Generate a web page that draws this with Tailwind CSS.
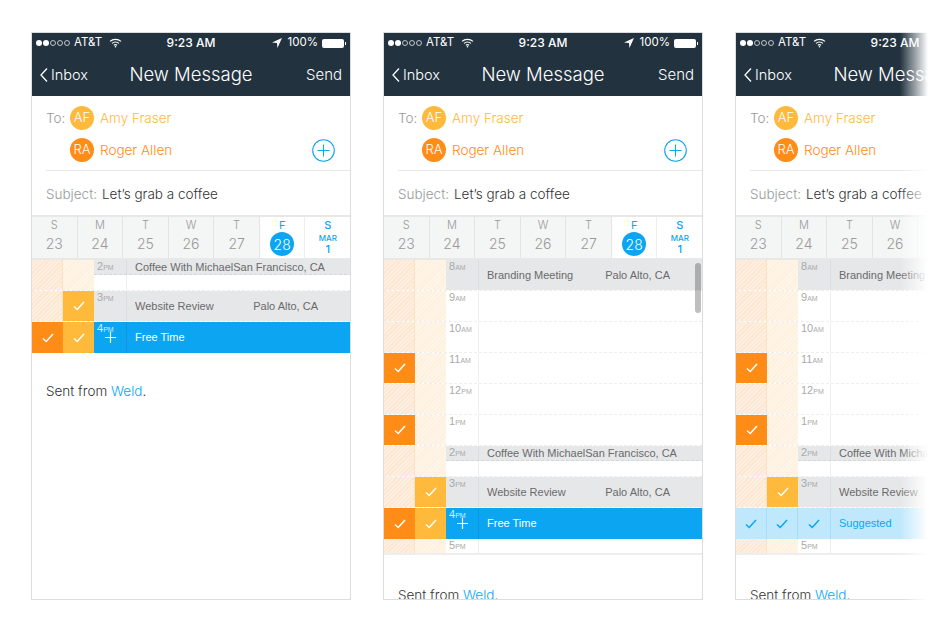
<!DOCTYPE html>
<html lang="en">
<head>
    <meta charset="UTF-8">
    <meta name="viewport" content="width=device-width, initial-scale=1.0">
    <title>Weld - New Message</title>
    <script src="https://cdn.jsdelivr.net/npm/@tailwindcss/browser@4"></script>
</head>
<body class="bg-white">
    <div class="relative w-[940px] h-[632px] overflow-hidden font-['Inter','Liberation_Sans',sans-serif] font-light">
        <div id="phones" class="flex gap-[32px] pl-[31px] pt-[32px]"></div>
        <!-- fade on the third phone -->
        <div class="absolute top-0 right-0 w-[40px] h-full bg-gradient-to-r from-white/0 to-white to-70%"></div>
    </div>

    <script>
        const check = (color = 'white') => `<svg width="12" height="10" viewBox="0 0 12 10" fill="none" stroke="${color}" stroke-width="1.5"><path d="M1 5.5 L4.2 8.5 L11 1"/></svg>`;
        const hatchOrange = '<div class="w-[31px] shrink-0 border-r border-[#fbe0c4] bg-[repeating-linear-gradient(135deg,#fde6cf_0,#fde6cf_1px,#feeee0_1px,#feeee0_3px)]"></div>';
        const hatchYellow = '<div class="w-[31px] shrink-0 bg-[repeating-linear-gradient(135deg,#fef0da_0,#fef0da_1px,#fef5e8_1px,#fef5e8_3px)]"></div>';
        const solidOrange = `<div class="w-[31px] shrink-0 bg-[#ff8c16] flex items-center justify-center">${check()}</div>`;
        const solidYellow = `<div class="w-[31px] shrink-0 bg-[#ffb93b] flex items-center justify-center">${check()}</div>`;
        const paleCheck = `<div class="w-[31px] shrink-0 border-r border-[#a9dcf6] flex items-center justify-center">${check('#0ba5f2')}</div>`;

        const time = (n, ap, color = 'text-[#aaa]') => `<span class="${color}">${n}<span class="text-[7px]">${ap}</span></span>`;
        const timeCell = (label, cls = 'border-[#eee]') => `<div class="w-[33px] shrink-0 border-r ${cls} pl-[3px] text-[11px] leading-[12px] font-['Liberation_Sans',sans-serif]">${label}</div>`;
        const event = (title, place) => `<div class="flex-1 flex items-center justify-between pl-[8px] pr-[32px] text-[11px] text-[#6a6a6a] whitespace-nowrap font-['Liberation_Sans',sans-serif]"><span>${title}</span><span>${place}</span></div>`;

        // one hour in the calendar, 31px tall
        const hour = (a, b, right, cls = 'border-b border-dashed border-[#eee]') => `<div class="flex h-[31px] shrink-0 ${cls}">${a}${b}<div class="flex-1 flex">${right}</div></div>`;
        const emptyHour = (a, b, n, ap) => hour(a, b, timeCell(time(n, ap)));
        const meeting = (a, b, n, ap, title, place) => hour(a, b, `<div class="flex-1 flex bg-[#e6e7e9]">${timeCell(time(n, ap), 'border-[#dcdde0]')}${event(title, place)}</div>`);
        const halfMeeting = (a, b, n, ap, title, place) => `<div class="flex h-[31px] shrink-0 border-b border-dashed border-[#eee]">${a}${b}<div class="flex-1 flex flex-col">
            <div class="h-[15px] flex bg-[#e6e7e9] border-b border-dashed border-[#d5d6d9]">${timeCell(time(n, ap), 'border-[#dcdde0]')}${event(title, place)}</div>
            <div class="flex-1 flex">${timeCell('')}</div></div></div>`;
        const freeTime = hour(solidOrange, solidYellow, `<div class="flex-1 flex bg-[#0ba5f2]">
            <div class="w-[33px] shrink-0 border-r border-[#0a97de] pl-[3px] relative text-[11px] leading-[12px] font-['Liberation_Sans',sans-serif]">${time('4', 'PM', 'text-[#d4effd]')}
                <svg class="absolute left-[10px] top-[9px]" width="13" height="13" viewBox="0 0 13 13" stroke="white" stroke-width="1.2"><path d="M6.5 1 V12 M1 6.5 H12"/></svg></div>
            <div class="flex-1 flex items-center pl-[8px] text-[11px] text-white font-['Liberation_Sans',sans-serif]">Free Time</div></div>`, '');
        const suggested = `<div class="flex h-[31px] shrink-0 bg-[#bfe8fc]">${paleCheck}${paleCheck}
            <div class="w-[33px] shrink-0 border-r border-[#a9dcf6] flex items-center justify-center">${check('#0ba5f2')}</div>
            <div class="flex-1 flex items-center pl-[8px] text-[11px] text-[#0ba5f2] font-['Liberation_Sans',sans-serif]">Suggested</div></div>`;
        const lastHalf = `<div class="flex h-[16px] shrink-0 mb-[2px] border-b-2 border-[#eee]">${hatchOrange}${hatchYellow}${timeCell(time('5', 'PM'))}</div>`;

        const day = (letter, num) => `<div class="flex-1 border-r border-[#e4e4e4] bg-[#f4f5f5] flex flex-col items-center text-[#999]">
            <span class="text-[11px] leading-[14px] mt-[1px]">${letter}</span><span class="text-[14px] leading-[20px] mt-[2px]">${num}</span></div>`;

        const header = `
            <div class="bg-[#22333f] h-[63px] text-white shrink-0">
                <div class="grid grid-cols-[1fr_auto_1fr] items-center h-[20px] px-[4px] text-[11.5px] font-normal">
                    <div class="flex items-center gap-[1.5px]">
                        <span class="w-[5.5px] h-[5.5px] rounded-full bg-white"></span><span class="w-[5.5px] h-[5.5px] rounded-full bg-white"></span>
                        <span class="w-[5.5px] h-[5.5px] rounded-full border border-white/70"></span><span class="w-[5.5px] h-[5.5px] rounded-full border border-white/70"></span><span class="w-[5.5px] h-[5.5px] rounded-full border border-white/70"></span>
                        <span class="ml-[3px]">AT&amp;T</span>
                        <svg class="ml-[5px]" width="13" height="10" viewBox="0 0 13 10" fill="none" stroke="white" stroke-width="1.2"><path d="M1 3.4 C4 0.6 9 0.6 12 3.4 M3 5.4 C5 3.6 8 3.6 10 5.4 M4.9 7.3 C5.8 6.5 7.2 6.5 8.1 7.3"/><circle cx="6.5" cy="8.8" r="0.8" fill="white" stroke="none"/></svg>
                    </div>
                    <div class="font-medium text-[12px]">9:23 AM</div>
                    <div class="flex items-center justify-end gap-[4px]">
                        <svg class="mr-[2px]" width="10" height="10" viewBox="0 0 10 10" fill="white"><path d="M10 0 L0 4.6 L5 5 L5.4 10 Z"/></svg>
                        <span>100%</span>
                        <span class="flex items-center gap-[1px]"><span class="w-[22px] h-[9px] bg-white rounded-[2px]"></span><span class="w-[1px] h-[3px] bg-white"></span></span>
                    </div>
                </div>
                <div class="grid grid-cols-[1fr_auto_1fr] items-center h-[43px] pt-[1px] px-[8px]">
                    <div class="flex items-center gap-[3px] text-[14.5px]">
                        <svg width="8" height="14" viewBox="0 0 8 14" fill="none" stroke="white" stroke-width="1.3"><path d="M7 0.5 L1 7 L7 13.5"/></svg>
                        <span>Inbox</span>
                    </div>
                    <div class="text-[18.5px]">New Message</div>
                    <div class="text-right text-[15px]">Send</div>
                </div>
            </div>
            <div class="h-[76px] pl-[14px] shrink-0">
                <div class="h-[75px] border-b border-[#e8e8e8] text-[13.5px] pt-[10px] pr-[15px]">
                    <div class="flex items-center h-[24px]">
                        <span class="w-[24px] text-[#999]">To:</span>
                        <span class="w-[24px] h-[24px] rounded-full bg-[#ffb93b] text-white text-[13px] flex items-center justify-center">AF</span>
                        <span class="ml-[6px] text-[#ffb93b]">Amy Fraser</span>
                    </div>
                    <div class="flex items-center h-[24px] mt-[8px] pl-[24px]">
                        <span class="w-[24px] h-[24px] rounded-full bg-[#ff8c16] text-white text-[13px] flex items-center justify-center">RA</span>
                        <span class="ml-[6px] text-[#ff8c16]">Roger Allen</span>
                        <svg class="ml-auto" width="23" height="23" viewBox="0 0 23 23" fill="none" stroke="#0ba5f2" stroke-width="1.1"><circle cx="11.5" cy="11.5" r="10.8"/><path d="M11.5 5.5 V17.5 M5.5 11.5 H17.5"/></svg>
                    </div>
                </div>
            </div>
            <div class="h-[43px] pl-[14px] pt-[1px] flex items-center text-[13.5px] shrink-0 whitespace-nowrap"><span class="text-[#999]">Subject:</span><span class="ml-[5px] text-[#333]">Let’s grab a coffee</span></div>
            <div class="flex h-[45px] border-y-2 border-[#e8e8e8] shrink-0">
                ${day('S', '23')}${day('M', '24')}${day('T', '25')}${day('W', '26')}${day('T', '27')}
                <div class="flex-1 border-r border-[#eee] flex flex-col items-center text-[#0ba5f2]">
                    <span class="text-[11px] leading-[14px] mt-[1px] font-normal">F</span>
                    <span class="w-[24px] h-[24px] rounded-full bg-[#0ba5f2] text-white text-[14px] flex items-center justify-center">28</span>
                </div>
                <div class="flex-1 flex flex-col items-center text-[#0ba5f2] font-medium">
                    <span class="text-[11px] leading-[14px] mt-[1px]">S</span>
                    <span class="text-[8px] leading-[9px] mt-[1.5px]">MAR</span>
                    <span class="text-[11px] leading-[12px]">1</span>
                </div>
            </div>`;

        const sent = '<div class="pl-[14px] pt-[28px] text-[13.5px] leading-[20px] text-[#333] shrink-0">Sent from <span class="text-[#0ba5f2]">Weld</span>.</div>';
        const phone = (body) => `<div class="relative w-[320px] h-[568px] shrink-0 flex flex-col border border-[#dcdcdc] overflow-hidden">${header}${body}${sent}</div>`;

        const longDay = (last) => `
            ${meeting(hatchOrange, hatchYellow, '8', 'AM', 'Branding Meeting', 'Palo Alto, CA')}
            ${emptyHour(hatchOrange, hatchYellow, '9', 'AM')}
            ${emptyHour(hatchOrange, hatchYellow, '10', 'AM')}
            ${emptyHour(solidOrange, hatchYellow, '11', 'AM')}
            ${emptyHour(hatchOrange, hatchYellow, '12', 'PM')}
            ${emptyHour(solidOrange, hatchYellow, '1', 'PM')}
            ${halfMeeting(hatchOrange, hatchYellow, '2', 'PM', 'Coffee With Michael', 'San Francisco, CA')}
            ${meeting(hatchOrange, solidYellow, '3', 'PM', 'Website Review', 'Palo Alto, CA')}
            ${last}
            ${lastHalf}`;

        document.getElementById('phones').innerHTML =
            phone(`${halfMeeting(hatchOrange, hatchYellow, '2', 'PM', 'Coffee With Michael', 'San Francisco, CA')}
                   ${meeting(hatchOrange, solidYellow, '3', 'PM', 'Website Review', 'Palo Alto, CA')}
                   ${freeTime}`) +
            phone(`${longDay(freeTime)}<div class="absolute left-[311px] top-[230px] w-[6px] h-[50px] rounded-full bg-black/25"></div>`) +
            phone(longDay(suggested));
    </script>
</body>
</html>
